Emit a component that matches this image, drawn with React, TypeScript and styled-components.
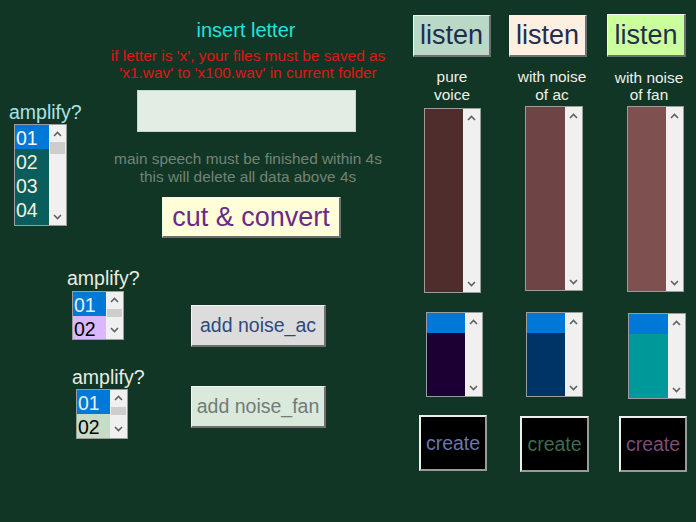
import React from "react";
import styled, { createGlobalStyle } from "styled-components";

const GlobalStyle = createGlobalStyle`
  html, body { margin: 0; padding: 0; background: #123625; }
  * { box-sizing: border-box; }
  #root { width: 696px; height: 522px; }
`;

const FONT = `"Liberation Sans", Arial, sans-serif`;

const Page = styled.div`
  width: 696px;
  height: 522px;
  background: #123625;
  display: flex;
  font-family: ${FONT};
  overflow: hidden;
`;

const LeftPanel = styled.div`
  width: 400px;
  display: flex;
  flex-direction: column;
`;

const TopRow = styled.div`
  display: grid;
  grid-template-columns: 100px 296px;
  align-items: start;
`;

const AmpGroup = styled.div<{ $pl: number; $mt: number; $lbx: number; $gap: number }>`
  padding-left: ${(p) => p.$pl}px;
  margin-top: ${(p) => p.$mt}px;
  display: flex;
  flex-direction: column;
  align-items: flex-start;
  gap: ${(p) => p.$gap}px;
  & > div:last-child { margin-left: ${(p) => p.$lbx}px; }
`;

const AmpLabel = styled.span<{ $color: string }>`
  font-size: 19.5px;
  line-height: 22.4px;
  color: ${(p) => p.$color};
  white-space: nowrap;
`;

const CenterColumn = styled.div`
  display: flex;
  flex-direction: column;
  align-items: center;
  padding-top: 19px;
`;

const Title = styled.div`
  font-size: 20px;
  line-height: 23px;
  color: #1fe3dc;
  margin-right: 4px;
`;

const Note = styled.div<{ $color: string; $mt: number; $lh: number }>`
  font-size: 15.4px;
  line-height: ${(p) => p.$lh}px;
  color: ${(p) => p.$color};
  text-align: center;
  margin-top: ${(p) => p.$mt}px;
  white-space: nowrap;
`;

const Entry = styled.input`
  width: 219px;
  height: 42px;
  margin-top: 9px;
  margin-right: 3px;
  background: #e2ede4;
  border: 1px solid #c9d6cd;
  outline: none;
  font-family: ${FONT};
`;

const RaisedButton = styled.button<{
  $bg: string;
  $fg: string;
  $w: number;
  $h: number;
  $size: number;
  $mt?: number;
  $ml?: number;
}>`
  width: ${(p) => p.$w}px;
  height: ${(p) => p.$h}px;
  margin-top: ${(p) => p.$mt ?? 0}px;
  margin-left: ${(p) => p.$ml ?? 0}px;
  background: ${(p) => p.$bg};
  color: ${(p) => p.$fg};
  font-family: ${FONT};
  font-size: ${(p) => p.$size}px;
  padding: 0;
  display: flex;
  align-items: center;
  justify-content: center;
  border-style: solid;
  border-width: 1px 2px 2px 1px;
  border-color: #f4f4f4 #6f6f6f #6f6f6f #f4f4f4;
  cursor: pointer;
  white-space: nowrap;
`;

const CreateButton = styled.button<{ $fg: string; $w: number; $mt: number; $ml: number }>`
  width: ${(p) => p.$w}px;
  height: 56px;
  margin-top: ${(p) => p.$mt}px;
  margin-left: ${(p) => p.$ml}px;
  background: #000;
  color: ${(p) => p.$fg};
  font-family: ${FONT};
  font-size: 19.5px;
  padding: 0;
  display: flex;
  align-items: center;
  justify-content: center;
  border-style: solid;
  border-width: 2px;
  border-color: #eeeeee #9a9a9a #9a9a9a #eeeeee;
  cursor: pointer;
`;

const NoiseRow = styled.div<{ $mt: number }>`
  display: grid;
  grid-template-columns: 191px 135px;
  align-items: start;
  margin-top: ${(p) => p.$mt}px;
`;

/* ---------- Listbox ---------- */

const ListFrame = styled.div<{ $w: number; $h: number; $fill: string; $mt?: number; $ml?: number }>`
  width: ${(p) => p.$w}px;
  height: ${(p) => p.$h}px;
  margin-top: ${(p) => p.$mt ?? 0}px;
  margin-left: ${(p) => p.$ml ?? 0}px;
  border: 1px solid #9c9c9c;
  display: flex;
  overflow: hidden;
  background: ${(p) => p.$fill};
  flex-shrink: 0;
`;

const ListItems = styled.div`
  flex: 1;
  display: flex;
  flex-direction: column;
  overflow: hidden;
`;

const ListRow = styled.div<{ $bg: string; $fg: string; $h: number }>`
  height: ${(p) => p.$h}px;
  flex-shrink: 0;
  background: ${(p) => p.$bg};
  color: ${(p) => p.$fg};
  font-size: 19.5px;
  line-height: 22px;
  padding: 2px 0 0 1px;
  font-family: ${FONT};
`;

const ScrollBar = styled.div`
  width: 17px;
  background: #f0f0f0;
  display: flex;
  flex-direction: column;
  flex-shrink: 0;
`;

const ScrollArrow = styled.div`
  height: 17px;
  display: flex;
  align-items: center;
  justify-content: center;
  flex-shrink: 0;
`;

const ScrollTrack = styled.div`
  flex: 1;
  display: flex;
  flex-direction: column;
  align-items: center;
  overflow: hidden;
`;

const Thumb = styled.div<{ $h: number }>`
  width: 15px;
  height: ${(p) => p.$h}px;
  background: #cdcdcd;
  flex-shrink: 0;
`;

const Chevron = ({ up }: { up: boolean }) => (
  <svg width="9" height="6" viewBox="0 0 9 6">
    <polyline
      points={up ? "1,5 4.5,1.5 8,5" : "1,1 4.5,4.5 8,1"}
      fill="none"
      stroke="#606060"
      strokeWidth="1.6"
    />
  </svg>
);

type Row = { text: string; bg: string; fg: string };

const Listbox = ({
  w,
  h,
  fill,
  rows,
  rowH = 24,
  thumb,
  mt,
  ml,
}: {
  w: number;
  h: number;
  fill: string;
  rows: Row[];
  rowH?: number;
  thumb?: number;
  mt?: number;
  ml?: number;
}) => (
  <ListFrame $w={w} $h={h} $fill={fill} $mt={mt} $ml={ml}>
    <ListItems>
      {rows.map((r, i) => (
        <ListRow key={i} $bg={r.bg} $fg={r.fg} $h={rowH}>
          {r.text}
        </ListRow>
      ))}
    </ListItems>
    <ScrollBar>
      <ScrollArrow>
        <Chevron up />
      </ScrollArrow>
      <ScrollTrack>{thumb ? <Thumb $h={thumb} /> : null}</ScrollTrack>
      <ScrollArrow>
        <Chevron up={false} />
      </ScrollArrow>
    </ScrollBar>
  </ListFrame>
);

/* ---------- Right columns ---------- */

const RightPanel = styled.div`
  display: flex;
  padding-left: 13px;
`;

const Column = styled.div<{ $w: number }>`
  width: ${(p) => p.$w}px;
  display: flex;
  flex-direction: column;
  align-items: flex-start;
`;

const ColLabel = styled.div<{ $mt: number; $center: number }>`
  width: 100px;
  margin-left: ${(p) => p.$center - 50}px;
  margin-top: ${(p) => p.$mt}px;
  font-size: 15.4px;
  line-height: 17.7px;
  color: #f0f0e8;
  text-align: center;
  white-space: nowrap;
`;

const BLUE = "#0078d7";

type ColCfg = {
  w: number;
  listenBg: string;
  listenW: number;
  listenH: number;
  listenMt: number;
  label: [string, string];
  labelMt: number;
  labelCenter: number;
  big: { mt: number; ml: number; w: number; h: number; fill: string };
  small: { mt: number; ml: number; w: number; h: number; fill: string };
  create: { mt: number; ml: number; w: number; fg: string };
};

const columns: ColCfg[] = [
  {
    w: 96,
    listenBg: "#bad8c6",
    listenW: 78,
    listenH: 42,
    listenMt: 15,
    label: ["pure", "voice"],
    labelMt: 11,
    labelCenter: 39,
    big: { mt: 4.6, ml: 11, w: 57, h: 185, fill: "#4f2d2d" },
    small: { mt: 19, ml: 13, w: 57, h: 85, fill: "#1c0034" },
    create: { mt: 18, ml: 6, w: 68, fg: "#6a78a8" },
  },
  {
    w: 98,
    listenBg: "#fef0e0",
    listenW: 78,
    listenH: 42,
    listenMt: 15,
    label: ["with noise", "of ac"],
    labelMt: 11,
    labelCenter: 43,
    big: { mt: 2.6, ml: 16, w: 58, h: 185, fill: "#6e4444" },
    small: { mt: 21, ml: 17, w: 57, h: 85, fill: "#003366" },
    create: { mt: 19, ml: 11, w: 69, fg: "#3d6b4e" },
  },
  {
    w: 89,
    listenBg: "#caff9c",
    listenW: 79,
    listenH: 43,
    listenMt: 14,
    label: ["with noise", "of fan"],
    labelMt: 11.5,
    labelCenter: 42,
    big: { mt: 2.1, ml: 20, w: 57, h: 186, fill: "#7f5050" },
    small: { mt: 21, ml: 21, w: 58, h: 86, fill: "#009999" },
    create: { mt: 17, ml: 12, w: 68, fg: "#7e4b76" },
  },
];

const TEAL = "#0a5d5d";
const CREAM = "#f3f0dc";

export default function App() {
  return (
    <>
      <GlobalStyle />
      <Page>
        <LeftPanel>
          <TopRow>
            <AmpGroup $pl={9} $mt={101} $lbx={5} $gap={0.6}>
              <AmpLabel $color="#a9e2ea">amplify?</AmpLabel>
              <Listbox
                w={53}
                h={102}
                fill={TEAL}
                thumb={12}
                rows={[
                  { text: "01", bg: BLUE, fg: "#f4f8ff" },
                  { text: "02", bg: TEAL, fg: CREAM },
                  { text: "03", bg: TEAL, fg: CREAM },
                  { text: "04", bg: TEAL, fg: CREAM },
                ]}
              />
            </AmpGroup>
            <CenterColumn>
              <Title>insert letter</Title>
              <Note $color="#e01414" $mt={5} $lh={17}>
                if letter is 'x', your files must be saved as
                <br />
                'x1.wav' to 'x100.wav' in current folder
              </Note>
              <Entry />
              <Note $color="#728475" $mt={18} $lh={17.5}>
                main speech must be finished within 4s
                <br />
                this will delete all data above 4s
              </Note>
              <RaisedButton
                $bg="#fffed8"
                $fg="#6b2a85"
                $w={179}
                $h={41}
                $size={27}
                $mt={12}
                $ml={7}
              >
                cut &amp; convert
              </RaisedButton>
            </CenterColumn>
          </TopRow>

          <NoiseRow $mt={28.7}>
            <AmpGroup $pl={67} $mt={0} $lbx={5} $gap={1.9}>
              <AmpLabel $color="#e8ece2">amplify?</AmpLabel>
              <Listbox
                w={52}
                h={49}
                fill="#d9b8ff"
                thumb={8}
                rows={[
                  { text: "01", bg: BLUE, fg: "#e4f2ff" },
                  { text: "02", bg: "#d9b8ff", fg: "#000" },
                ]}
              />
            </AmpGroup>
            <RaisedButton $bg="#dcdcdc" $fg="#2d4a7e" $w={135} $h={42} $size={19.5} $mt={38.3}>
              add noise_ac
            </RaisedButton>
          </NoiseRow>

          <NoiseRow $mt={18.7}>
            <AmpGroup $pl={72} $mt={0} $lbx={4} $gap={0.9}>
              <AmpLabel $color="#e8ece2">amplify?</AmpLabel>
              <Listbox
                w={52}
                h={50}
                fill="#c6dcc6"
                thumb={8}
                rows={[
                  { text: "01", bg: BLUE, fg: "#e4f2ff" },
                  { text: "02", bg: "#c6dcc6", fg: "#000" },
                ]}
              />
            </AmpGroup>
            <RaisedButton $bg="#d9eadd" $fg="#737b75" $w={135} $h={42} $size={19.5} $mt={20.3}>
              add noise_fan
            </RaisedButton>
          </NoiseRow>
        </LeftPanel>

        <RightPanel>
          {columns.map((c, i) => (
            <Column key={i} $w={c.w}>
              <RaisedButton
                $bg={c.listenBg}
                $fg="#1e2e50"
                $w={c.listenW}
                $h={c.listenH}
                $size={27}
                $mt={c.listenMt}
              >
                listen
              </RaisedButton>
              <ColLabel $mt={c.labelMt} $center={c.labelCenter}>
                {c.label[0]}
                <br />
                {c.label[1]}
              </ColLabel>
              <Listbox
                w={c.big.w}
                h={c.big.h}
                fill={c.big.fill}
                rows={[]}
                mt={c.big.mt}
                ml={c.big.ml}
              />
              <Listbox
                w={c.small.w}
                h={c.small.h}
                fill={c.small.fill}
                rowH={20}
                rows={[{ text: "", bg: BLUE, fg: "#fff" }]}
                mt={c.small.mt}
                ml={c.small.ml}
              />
              <CreateButton $fg={c.create.fg} $w={c.create.w} $mt={c.create.mt} $ml={c.create.ml}>
                create
              </CreateButton>
            </Column>
          ))}
        </RightPanel>
      </Page>
    </>
  );
}
